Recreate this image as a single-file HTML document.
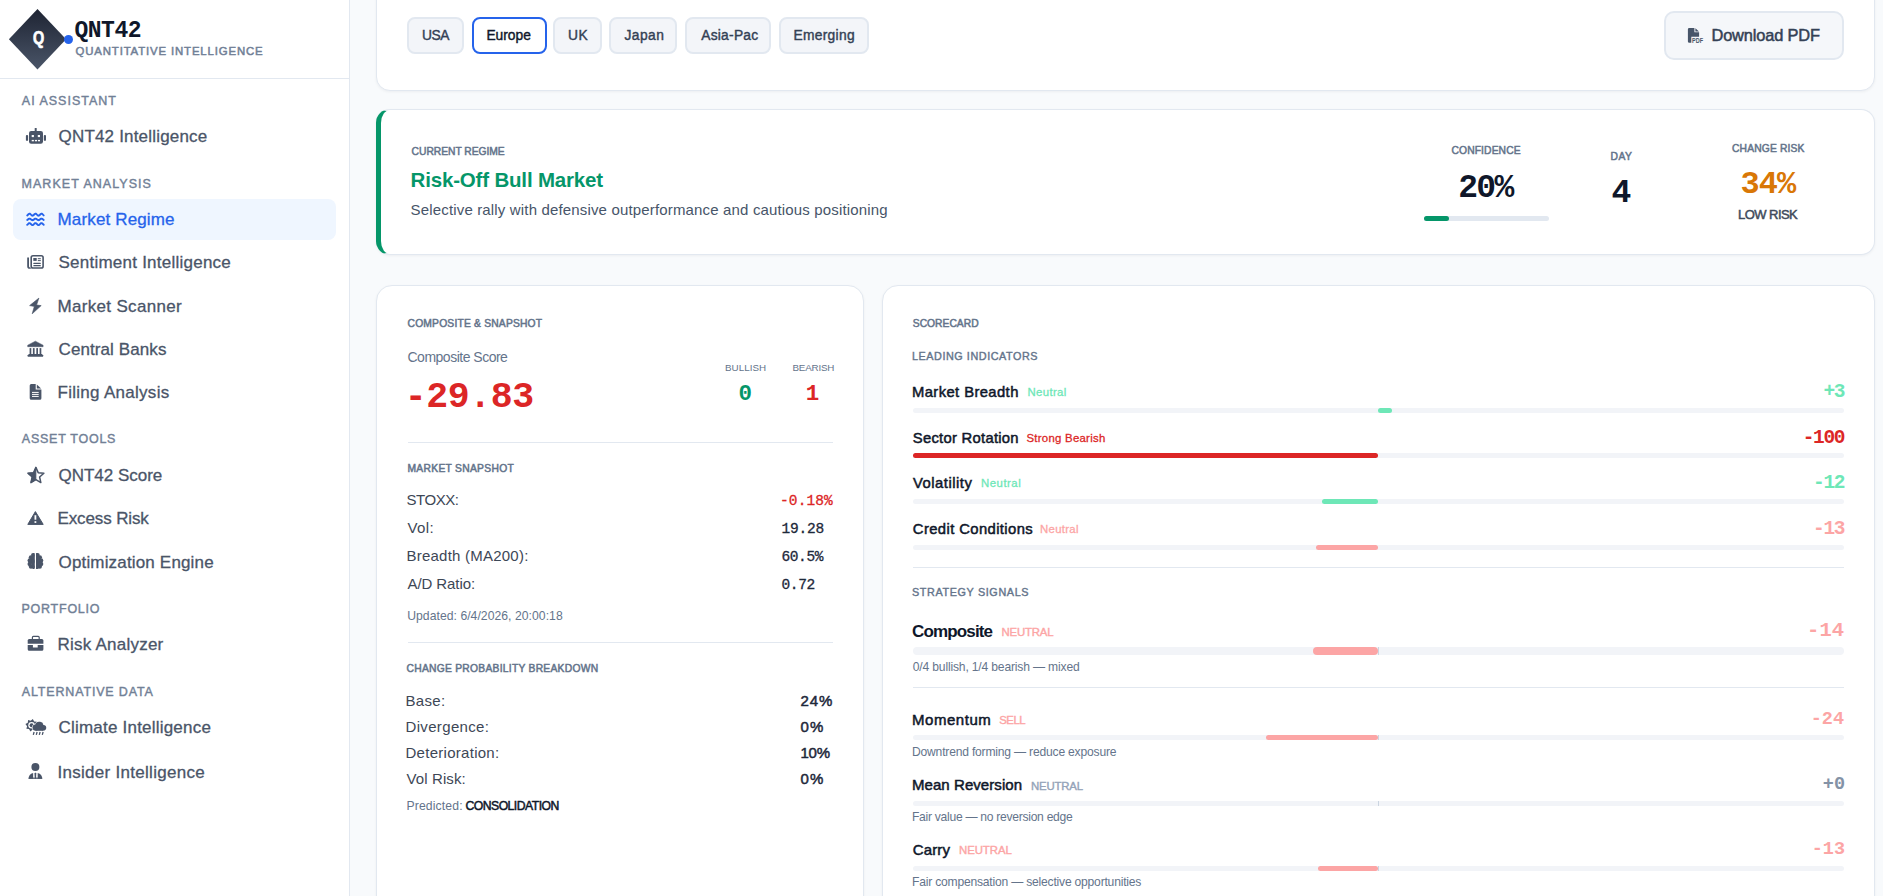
<!DOCTYPE html>
<html><head><meta charset="utf-8"><title>QNT42 Market Regime</title>
<style>
html,body{margin:0;padding:0;}
body{width:1883px;height:896px;overflow:hidden;background:#f8fafc;position:relative;font-family:"Liberation Sans",sans-serif;}
.b{position:absolute;}
.t{position:absolute;line-height:0;white-space:nowrap;}
svg{position:absolute;}
</style></head><body>
<div class="b" style="left:0.00px;top:0.00px;width:349.00px;height:896.00px;background:#fff;"></div>
<div class="b" style="left:349.00px;top:0.00px;width:1.00px;height:896.00px;background:#e2e8f0;"></div>
<div class="b" style="left:0.00px;top:78.00px;width:349.00px;height:1.00px;background:#e2e8f0;"></div>
<div class="b" style="left:8.9px;top:8.9px;width:57.2px;height:60.7px;clip-path:polygon(50% 0,100% 50%,50% 100%,0 50%);background:linear-gradient(180deg,#1e2433,#4a5568);"></div>
<div class="t" style="left:33.2px;top:38.16px;font-family:'Liberation Sans', sans-serif;font-size:18px;font-weight:700;color:#fff;-webkit-text-stroke:0.7px #fff;transform:scaleX(0.8);transform-origin:0 0;">Q</div>
<div class="b" style="left:63.9px;top:34.5px;width:9px;height:9px;border-radius:50%;background:#2563eb;"></div>
<div class="b" style="left:13.00px;top:199.00px;width:323.00px;height:41.00px;background:#eff6ff;border-radius:8px;"></div>
<div class="b" style="left:376.00px;top:-20.00px;width:1499.00px;height:110.50px;background:#fff;border:1px solid #e2e8f0;border-radius:14px;box-sizing:border-box;box-shadow:0 1px 3px rgba(15,23,42,0.05);"></div>
<div class="b" style="left:407.20px;top:17.00px;width:57.30px;height:37.00px;background:#f3f5f9;border:2px solid #e2e8f0;border-radius:8px;box-sizing:border-box;"></div>
<div class="b" style="left:472.20px;top:17.00px;width:74.40px;height:37.00px;background:#fff;border:2px solid #2563eb;border-radius:8px;box-sizing:border-box;"></div>
<div class="b" style="left:553.00px;top:17.00px;width:48.50px;height:37.00px;background:#f3f5f9;border:2px solid #e2e8f0;border-radius:8px;box-sizing:border-box;"></div>
<div class="b" style="left:609.20px;top:17.00px;width:68.10px;height:37.00px;background:#f3f5f9;border:2px solid #e2e8f0;border-radius:8px;box-sizing:border-box;"></div>
<div class="b" style="left:685.20px;top:17.00px;width:86.20px;height:37.00px;background:#f3f5f9;border:2px solid #e2e8f0;border-radius:8px;box-sizing:border-box;"></div>
<div class="b" style="left:779.20px;top:17.00px;width:90.20px;height:37.00px;background:#f3f5f9;border:2px solid #e2e8f0;border-radius:8px;box-sizing:border-box;"></div>
<div class="b" style="left:1664.00px;top:11.00px;width:180.00px;height:48.50px;background:#f5f7fa;border:2px solid #e2e8f0;border-radius:10px;box-sizing:border-box;"></div>
<div class="b" style="left:376.00px;top:109.00px;width:1499.00px;height:145.50px;background:#fff;border:1px solid #e2e8f0;border-left:5px solid #059669;border-radius:14px;box-sizing:border-box;box-shadow:0 1px 3px rgba(15,23,42,0.05);"></div>
<div class="b" style="left:1424.00px;top:216.00px;width:125.00px;height:5.00px;background:#e2e8f0;border-radius:3px;"></div>
<div class="b" style="left:1424.00px;top:216.00px;width:25.00px;height:5.00px;background:#059669;border-radius:3px;"></div>
<div class="b" style="left:376.00px;top:285.00px;width:488.00px;height:700.00px;background:#fff;border:1px solid #e2e8f0;border-radius:16px;box-sizing:border-box;box-shadow:0 1px 3px rgba(15,23,42,0.05);"></div>
<div class="b" style="left:407.50px;top:442.00px;width:425.50px;height:1.00px;background:#e2e8f0;"></div>
<div class="b" style="left:407.50px;top:642.00px;width:425.50px;height:1.00px;background:#e2e8f0;"></div>
<div class="b" style="left:882.00px;top:285.00px;width:993.00px;height:700.00px;background:#fff;border:1px solid #e2e8f0;border-radius:16px;box-sizing:border-box;box-shadow:0 1px 3px rgba(15,23,42,0.05);"></div>
<div class="b" style="left:913.00px;top:408.00px;width:931.00px;height:5.00px;background:#f2f4f8;border-radius:5px;"></div><div class="b" style="left:1378.00px;top:408.00px;width:14.00px;height:5.00px;background:#6ee7b7;border-radius:5px;"></div>
<div class="b" style="left:913.00px;top:453.00px;width:931.00px;height:5.00px;background:#f2f4f8;border-radius:5px;"></div><div class="b" style="left:913.00px;top:453.00px;width:465.00px;height:5.00px;background:#dc2626;border-radius:5px;"></div>
<div class="b" style="left:913.00px;top:499.00px;width:931.00px;height:5.00px;background:#f2f4f8;border-radius:5px;"></div><div class="b" style="left:1322.00px;top:499.00px;width:56.00px;height:5.00px;background:#6ee7b7;border-radius:5px;"></div>
<div class="b" style="left:913.00px;top:544.50px;width:931.00px;height:5.00px;background:#f2f4f8;border-radius:5px;"></div><div class="b" style="left:1316.00px;top:544.50px;width:62.00px;height:5.00px;background:#fca5a5;border-radius:5px;"></div>
<div class="b" style="left:913.00px;top:567.00px;width:931.00px;height:1.00px;background:#e2e8f0;"></div>
<div class="b" style="left:913.00px;top:647.00px;width:931.00px;height:8.00px;background:#f2f4f8;border-radius:8px;"></div><div class="b" style="left:1313.00px;top:647.00px;width:65.00px;height:8.00px;background:#fca5a5;border-radius:8px;"></div><div class="b" style="left:1378.00px;top:647.00px;width:1.00px;height:8.00px;background:#cbd5e1;"></div>
<div class="b" style="left:913.00px;top:687.00px;width:931.00px;height:1.00px;background:#e2e8f0;"></div>
<div class="b" style="left:913.00px;top:735.00px;width:931.00px;height:5.00px;background:#f2f4f8;border-radius:5px;"></div><div class="b" style="left:1266.00px;top:735.00px;width:112.00px;height:5.00px;background:#fca5a5;border-radius:5px;"></div><div class="b" style="left:1378.00px;top:735.00px;width:1.00px;height:5.00px;background:#cbd5e1;"></div>
<div class="b" style="left:913.00px;top:801.00px;width:931.00px;height:5.00px;background:#f2f4f8;border-radius:5px;"></div><div class="b" style="left:1378.00px;top:801.00px;width:1.00px;height:5.00px;background:#cbd5e1;"></div>
<div class="b" style="left:913.00px;top:866.00px;width:931.00px;height:5.00px;background:#f2f4f8;border-radius:5px;"></div><div class="b" style="left:1318.00px;top:866.00px;width:60.00px;height:5.00px;background:#fca5a5;border-radius:5px;"></div><div class="b" style="left:1378.00px;top:866.00px;width:1.00px;height:5.00px;background:#cbd5e1;"></div>
<svg style="left:0;top:0" width="349" height="896" viewBox="0 0 349 896">
<g fill="#4a5568">
<!-- robot -->
<rect x="34.7" y="128" width="2" height="4" rx="0.6"/>
<rect x="29" y="131" width="14" height="12.8" rx="2.2"/>
<rect x="25.9" y="135" width="2.2" height="5.8" rx="0.9"/>
<rect x="43.8" y="135" width="2.2" height="5.8" rx="0.9"/>
<g fill="#fff"><rect x="31.7" y="135" width="2.2" height="2.1"/><rect x="37.8" y="135" width="2.2" height="2.1"/>
<rect x="31.7" y="139.9" width="2.2" height="1.4"/><rect x="34.9" y="139.9" width="2.1" height="1.4"/><rect x="37.9" y="139.9" width="2.1" height="1.4"/></g>
<!-- newspaper -->
<rect x="31.2" y="255.7" width="11.9" height="12.3" rx="1.8" fill="none" stroke="#4a5568" stroke-width="1.6"/>
<path d="M27.2,257.5 H29 V266.6 Q29,267.5 30.4,267.5 L31,268.8 H29.8 Q27.2,268.8 27.2,266.2 Z"/>
<rect x="33.3" y="258" width="3.4" height="2.9"/>
<rect x="37.8" y="258.2" width="3" height="1"/><rect x="37.8" y="260.1" width="3" height="1"/>
<rect x="33.3" y="262.8" width="7.5" height="1.2" rx="0.5"/><rect x="33.3" y="265" width="7.5" height="1.2" rx="0.5"/>
<!-- bolt -->
<polygon points="38.9,298.1 29.6,305.6 34.3,306.4 32.2,313.8 41.2,305.6 36.6,305.0" stroke="#4a5568" stroke-width="0.6" stroke-linejoin="round"/>
<!-- bank -->
<polygon points="35.4,341.2 43.1,345.2 43.1,346.7 27.7,346.7 27.7,345.2" stroke="#4a5568" stroke-width="0.5" stroke-linejoin="round"/>
<rect x="29.6" y="348.1" width="1.7" height="6.4"/><rect x="32.9" y="348.1" width="1.7" height="6.4"/>
<rect x="36.3" y="348.1" width="1.7" height="6.4"/><rect x="39.6" y="348.1" width="1.7" height="6.4"/>
<rect x="28.6" y="354" width="13.6" height="1"/>
<rect x="27.7" y="354.8" width="15.4" height="2" rx="0.4"/>
<!-- file -->
<path d="M29.7,385.5 Q29.7,384 31.2,384 H35.7 V389.6 H41.4 V398.3 Q41.4,399.8 39.9,399.8 H31.2 Q29.7,399.8 29.7,398.3 Z"/>
<polygon points="36.8,384.4 41.1,388.6 36.8,388.6"/>
<g fill="#fff"><rect x="32" y="391.9" width="6.7" height="1"/><rect x="32" y="393.9" width="6.7" height="1"/><rect x="32" y="395.9" width="6.7" height="1"/></g>
<!-- star half -->
<polygon points="35.90,467.40 38.19,472.64 43.89,473.20 39.61,477.01 40.84,482.60 35.90,479.70 30.96,482.60 32.19,477.01 27.91,473.20 33.61,472.64" fill="none" stroke="#4a5568" stroke-width="1.5" stroke-linejoin="round"/>
<polygon points="35.90,467.40 33.61,472.64 27.91,473.20 32.19,477.01 30.96,482.60 35.90,479.70" stroke="#4a5568" stroke-width="0.8" stroke-linejoin="round"/>
<!-- triangle -->
<polygon points="35.4,511.6 43.2,524.4 27.8,524.4" stroke="#4a5568" stroke-width="1" stroke-linejoin="round"/>
<g fill="#fff"><rect x="34.5" y="515.2" width="1.8" height="4.5"/><rect x="34.5" y="521.2" width="1.8" height="1.7"/></g>
<!-- brain -->
<defs><clipPath id="bl"><rect x="20" y="550" width="14.7" height="22"/></clipPath><clipPath id="br"><rect x="36.1" y="550" width="14" height="22"/></clipPath></defs>
<g clip-path="url(#bl)"><circle cx="32.3" cy="561.3" r="2.6"/><circle cx="33.00" cy="554.90" r="1.90"/><circle cx="30.90" cy="557.30" r="2.10"/><circle cx="29.80" cy="560.50" r="2.30"/><circle cx="29.70" cy="563.90" r="2.20"/><circle cx="31.00" cy="566.50" r="2.20"/><circle cx="33.20" cy="567.10" r="1.80"/><rect x="31.6" y="554.6" width="3.2" height="13.2"/><rect x="33" y="553" width="1.8" height="15.9" rx="0.5"/></g>
<g clip-path="url(#br)"><circle cx="38.5" cy="561.3" r="2.6"/><circle cx="37.80" cy="554.90" r="1.90"/><circle cx="39.90" cy="557.30" r="2.10"/><circle cx="41.00" cy="560.50" r="2.30"/><circle cx="41.10" cy="563.90" r="2.20"/><circle cx="39.80" cy="566.50" r="2.20"/><circle cx="37.60" cy="567.10" r="1.80"/><rect x="36.0" y="554.6" width="3.2" height="13.2"/><rect x="36.0" y="553" width="1.8" height="15.9" rx="0.5"/></g>
<!-- briefcase -->
<rect x="32.4" y="636.4" width="6.8" height="3.6" rx="1" fill="none" stroke="#4a5568" stroke-width="1.2"/>
<path d="M27.7,640.5 Q27.7,639 29.2,639 H41.9 Q43.4,639 43.4,640.5 V643.7 H27.7 Z"/>
<path d="M27.7,645.1 H32.9 V647.4 H37.7 V645.1 H43.4 V649.3 Q43.4,650.8 41.9,650.8 H29.2 Q27.7,650.8 27.7,649.3 Z"/>
<!-- cloud sun rain -->
<polygon points="32.83,719.12 34.16,721.48 36.84,721.80 36.11,724.40 37.78,726.53 35.42,727.86 35.10,730.54 32.50,729.81 30.37,731.48 29.04,729.12 26.36,728.80 27.09,726.20 25.42,724.07 27.78,722.74 28.10,720.06 30.70,720.79"/>
<circle cx="31.6" cy="725.3" r="3.3" fill="#fff"/>
<circle cx="31.6" cy="725.3" r="2.0"/>
<g stroke="#fff" stroke-width="1.2">
<circle cx="39.3" cy="725.9" r="4.1"/><circle cx="35.6" cy="727.6" r="3.1"/><circle cx="43.4" cy="727.7" r="2.8"/>
</g>
<circle cx="39.3" cy="725.9" r="4.1"/><circle cx="35.6" cy="727.6" r="3.1"/><circle cx="43.4" cy="727.7" r="2.8"/>
<rect x="35.6" y="726.5" width="7.8" height="4.3"/>
<g stroke="#4a5568" stroke-width="1.3" stroke-linecap="butt">
<line x1="34.1" y1="732" x2="33.3" y2="734.9"/><line x1="37.1" y1="732" x2="36.3" y2="734.9"/><line x1="40.1" y1="732" x2="39.3" y2="734.9"/><line x1="43.1" y1="732" x2="42.3" y2="734.9"/>
</g>
<!-- user tie -->
<circle cx="35.4" cy="766.9" r="4"/>
<path d="M28.6,778.8 Q28.6,774.0 33.1,772.9 V778.8 Z"/>
<path d="M42.2,778.8 Q42.2,774.0 37.7,772.9 V778.8 Z"/>
<polygon points="35.4,772.6 36.3,773.5 36.0,778.8 34.8,778.8 34.5,773.5"/>
<rect x="28.6" y="777.6" width="13.6" height="1.2"/>
</g>
<g fill="none"><rect x="12.5" y="198.5" width="0" height="0"/></g>
<g><polyline points="27.20,215.44 27.70,215.01 28.20,214.49 28.70,214.03 29.20,213.75 29.70,213.72 30.20,213.96 30.70,214.39 31.20,214.91 31.70,215.37 32.20,215.65 32.70,215.68 33.20,215.44 33.70,215.01 34.20,214.49 34.70,214.03 35.20,213.75 35.70,213.72 36.20,213.96 36.70,214.39 37.20,214.91 37.70,215.37 38.20,215.65 38.70,215.68 39.20,215.44 39.70,215.01 40.20,214.49 40.70,214.03 41.20,213.75 41.70,213.72 42.20,213.96 42.70,214.39 43.20,214.91 43.70,215.37" fill="none" stroke="#2563eb" stroke-width="1.9" stroke-linecap="round" stroke-linejoin="round"/><polyline points="27.20,219.99 27.70,219.65 28.20,219.23 28.70,218.86 29.20,218.64 29.70,218.62 30.20,218.81 30.70,219.15 31.20,219.57 31.70,219.94 32.20,220.16 32.70,220.18 33.20,219.99 33.70,219.65 34.20,219.23 34.70,218.86 35.20,218.64 35.70,218.62 36.20,218.81 36.70,219.15 37.20,219.57 37.70,219.94 38.20,220.16 38.70,220.18 39.20,219.99 39.70,219.65 40.20,219.23 40.70,218.86 41.20,218.64 41.70,218.62 42.20,218.81 42.70,219.15 43.20,219.57 43.70,219.94" fill="none" stroke="#2563eb" stroke-width="1.9" stroke-linecap="round" stroke-linejoin="round"/><polyline points="27.20,224.84 27.70,224.41 28.20,223.89 28.70,223.43 29.20,223.15 29.70,223.12 30.20,223.36 30.70,223.79 31.20,224.31 31.70,224.77 32.20,225.05 32.70,225.08 33.20,224.84 33.70,224.41 34.20,223.89 34.70,223.43 35.20,223.15 35.70,223.12 36.20,223.36 36.70,223.79 37.20,224.31 37.70,224.77 38.20,225.05 38.70,225.08 39.20,224.84 39.70,224.41 40.20,223.89 40.70,223.43 41.20,223.15 41.70,223.12 42.20,223.36 42.70,223.79 43.20,224.31 43.70,224.77" fill="none" stroke="#2563eb" stroke-width="1.9" stroke-linecap="round" stroke-linejoin="round"/></g>
</svg>
<svg style="left:1680px;top:20px" width="30" height="30" viewBox="1680 20 30 30">
<path d="M1687.9,29.3 Q1687.9,27.9 1689.3,27.9 H1694.4 V32.3 H1699.1 V36.7 H1691.3 V42.8 H1689.3 Q1687.9,42.8 1687.9,41.4 Z" fill="#475569"/>
<polygon points="1695.4,28.2 1699,31.6 1695.4,31.6" fill="#475569"/>
<text x="1692" y="42.8" font-family="'Liberation Sans', sans-serif" font-size="6.5" font-weight="700" fill="#475569" textLength="11" lengthAdjust="spacingAndGlyphs">PDF</text>
</svg>

<div class="t" id="logo" style="top:30.77px;font-family:'Liberation Mono', monospace;font-size:23.00px;font-weight:700;color:#0f172a;letter-spacing:-0.500px;left:74.50px;">QNT42</div>
<div class="t" id="logosub" style="top:51.15px;font-family:'Liberation Sans', sans-serif;font-size:11.40px;font-weight:400;color:#718096;-webkit-text-stroke:0.5px #718096;letter-spacing:0.854px;left:75.50px;">QUANTITATIVE INTELLIGENCE</div>
<div class="t" id="lbl0" style="top:100.67px;font-family:'Liberation Sans', sans-serif;font-size:12.50px;font-weight:400;color:#718096;-webkit-text-stroke:0.4px #718096;letter-spacing:1.000px;left:21.80px;">AI ASSISTANT</div>
<div class="t" id="lbl1" style="top:183.67px;font-family:'Liberation Sans', sans-serif;font-size:12.50px;font-weight:400;color:#718096;-webkit-text-stroke:0.4px #718096;letter-spacing:1.036px;left:21.50px;">MARKET ANALYSIS</div>
<div class="t" id="lbl2" style="top:438.87px;font-family:'Liberation Sans', sans-serif;font-size:12.50px;font-weight:400;color:#718096;-webkit-text-stroke:0.4px #718096;letter-spacing:0.750px;left:21.80px;">ASSET TOOLS</div>
<div class="t" id="lbl3" style="top:608.67px;font-family:'Liberation Sans', sans-serif;font-size:12.50px;font-weight:400;color:#718096;-webkit-text-stroke:0.4px #718096;letter-spacing:0.750px;left:21.50px;">PORTFOLIO</div>
<div class="t" id="lbl4" style="top:691.92px;font-family:'Liberation Sans', sans-serif;font-size:12.50px;font-weight:400;color:#718096;-webkit-text-stroke:0.4px #718096;letter-spacing:0.833px;left:21.80px;">ALTERNATIVE DATA</div>
<div class="t" id="nav0" style="top:137.11px;font-family:'Liberation Sans', sans-serif;font-size:17.00px;font-weight:400;color:#4a5568;-webkit-text-stroke:0.3px #4a5568;letter-spacing:0.188px;left:58.50px;">QNT42 Intelligence</div>
<div class="t" id="nav1" style="top:220.31px;font-family:'Liberation Sans', sans-serif;font-size:17.00px;font-weight:400;color:#2563eb;-webkit-text-stroke:0.3px #2563eb;letter-spacing:0.150px;left:57.50px;">Market Regime</div>
<div class="t" id="nav2" style="top:263.11px;font-family:'Liberation Sans', sans-serif;font-size:17.00px;font-weight:400;color:#4a5568;-webkit-text-stroke:0.3px #4a5568;letter-spacing:0.238px;left:58.50px;">Sentiment Intelligence</div>
<div class="t" id="nav3" style="top:306.91px;font-family:'Liberation Sans', sans-serif;font-size:17.00px;font-weight:400;color:#4a5568;-webkit-text-stroke:0.3px #4a5568;letter-spacing:0.323px;left:57.50px;">Market Scanner</div>
<div class="t" id="nav4" style="top:350.31px;font-family:'Liberation Sans', sans-serif;font-size:17.00px;font-weight:400;color:#4a5568;-webkit-text-stroke:0.3px #4a5568;letter-spacing:0.100px;left:58.50px;">Central Banks</div>
<div class="t" id="nav5" style="top:393.11px;font-family:'Liberation Sans', sans-serif;font-size:17.00px;font-weight:400;color:#4a5568;-webkit-text-stroke:0.3px #4a5568;letter-spacing:0.286px;left:57.50px;">Filing Analysis</div>
<div class="t" id="nav6" style="top:475.51px;font-family:'Liberation Sans', sans-serif;font-size:17.00px;font-weight:400;color:#4a5568;-webkit-text-stroke:0.3px #4a5568;letter-spacing:-0.020px;left:58.50px;">QNT42 Score</div>
<div class="t" id="nav7" style="top:519.21px;font-family:'Liberation Sans', sans-serif;font-size:17.00px;font-weight:400;color:#4a5568;-webkit-text-stroke:0.3px #4a5568;letter-spacing:-0.120px;left:57.50px;">Excess Risk</div>
<div class="t" id="nav8" style="top:562.61px;font-family:'Liberation Sans', sans-serif;font-size:17.00px;font-weight:400;color:#4a5568;-webkit-text-stroke:0.3px #4a5568;letter-spacing:0.167px;left:58.50px;">Optimization Engine</div>
<div class="t" id="nav9" style="top:645.31px;font-family:'Liberation Sans', sans-serif;font-size:17.00px;font-weight:400;color:#4a5568;-webkit-text-stroke:0.3px #4a5568;letter-spacing:0.233px;left:57.50px;">Risk Analyzer</div>
<div class="t" id="nav10" style="top:728.01px;font-family:'Liberation Sans', sans-serif;font-size:17.00px;font-weight:400;color:#4a5568;-webkit-text-stroke:0.3px #4a5568;letter-spacing:0.211px;left:58.50px;">Climate Intelligence</div>
<div class="t" id="nav11" style="top:772.61px;font-family:'Liberation Sans', sans-serif;font-size:17.00px;font-weight:400;color:#4a5568;-webkit-text-stroke:0.3px #4a5568;letter-spacing:0.284px;left:57.50px;">Insider Intelligence</div>
<div class="t" id="pill0" style="top:36.32px;font-family:'Liberation Sans', sans-serif;font-size:13.80px;font-weight:400;color:#334155;-webkit-text-stroke:0.4px #334155;letter-spacing:-0.500px;left:422.00px;">USA</div>
<div class="t" id="pill1" style="top:36.32px;font-family:'Liberation Sans', sans-serif;font-size:13.80px;font-weight:400;color:#0f172a;-webkit-text-stroke:0.4px #0f172a;letter-spacing:-0.000px;left:486.40px;">Europe</div>
<div class="t" id="pill2" style="top:36.32px;font-family:'Liberation Sans', sans-serif;font-size:13.80px;font-weight:400;color:#334155;-webkit-text-stroke:0.4px #334155;letter-spacing:0.500px;left:568.00px;">UK</div>
<div class="t" id="pill3" style="top:36.32px;font-family:'Liberation Sans', sans-serif;font-size:13.80px;font-weight:400;color:#334155;-webkit-text-stroke:0.4px #334155;letter-spacing:0.450px;left:624.50px;">Japan</div>
<div class="t" id="pill4" style="top:36.32px;font-family:'Liberation Sans', sans-serif;font-size:13.80px;font-weight:400;color:#334155;-webkit-text-stroke:0.4px #334155;letter-spacing:0.257px;left:701.20px;">Asia-Pac</div>
<div class="t" id="pill5" style="top:36.32px;font-family:'Liberation Sans', sans-serif;font-size:13.80px;font-weight:400;color:#334155;-webkit-text-stroke:0.4px #334155;letter-spacing:0.286px;left:793.50px;">Emerging</div>
<div class="t" id="dl" style="top:35.02px;font-family:'Liberation Sans', sans-serif;font-size:16.40px;font-weight:400;color:#334155;-webkit-text-stroke:0.5px #334155;letter-spacing:-0.164px;left:1711.50px;">Download PDF</div>
<div class="t" id="cr" style="top:152.43px;font-family:'Liberation Sans', sans-serif;font-size:10.30px;font-weight:400;color:#64748b;-webkit-text-stroke:0.5px #64748b;letter-spacing:-0.038px;left:411.60px;">CURRENT REGIME</div>
<div class="t" id="rname" style="top:179.90px;font-family:'Liberation Sans', sans-serif;font-size:20.50px;font-weight:700;color:#059669;letter-spacing:-0.179px;left:410.60px;">Risk-Off Bull Market</div>
<div class="t" id="rdesc" style="top:209.60px;font-family:'Liberation Sans', sans-serif;font-size:15.00px;font-weight:400;color:#475569;letter-spacing:0.159px;left:410.60px;">Selective rally with defensive outperformance and cautious positioning</div>
<div class="t" id="conf" style="top:151.33px;font-family:'Liberation Sans', sans-serif;font-size:10.30px;font-weight:400;color:#64748b;-webkit-text-stroke:0.5px #64748b;letter-spacing:0.111px;left:1451.50px;">CONFIDENCE</div>
<div class="t" id="confv" style="top:188.51px;font-family:'Liberation Mono', monospace;font-size:33.00px;font-weight:700;color:#0f172a;letter-spacing:-1.700px;left:1458.20px;">20%</div>
<div class="t" id="day" style="top:157.33px;font-family:'Liberation Sans', sans-serif;font-size:10.30px;font-weight:400;color:#64748b;-webkit-text-stroke:0.5px #64748b;letter-spacing:0.500px;left:1610.50px;">DAY</div>
<div class="t" id="dayv" style="top:194.31px;font-family:'Liberation Mono', monospace;font-size:33.00px;font-weight:700;color:#0f172a;left:1611.50px;">4</div>
<div class="t" id="chr" style="top:148.93px;font-family:'Liberation Sans', sans-serif;font-size:10.30px;font-weight:400;color:#64748b;-webkit-text-stroke:0.5px #64748b;letter-spacing:0.150px;left:1732.00px;">CHANGE RISK</div>
<div class="t" id="chrv" style="top:185.47px;font-family:'Liberation Mono', monospace;font-size:32.00px;font-weight:700;color:#d97706;letter-spacing:-0.900px;left:1740.50px;">34%</div>
<div class="t" id="lowr" style="top:214.90px;font-family:'Liberation Sans', sans-serif;font-size:13.00px;font-weight:400;color:#414b5c;-webkit-text-stroke:0.5px #414b5c;letter-spacing:-0.543px;left:1738.00px;">LOW RISK</div>
<div class="t" id="cs" style="top:323.73px;font-family:'Liberation Sans', sans-serif;font-size:10.30px;font-weight:400;color:#64748b;-webkit-text-stroke:0.5px #64748b;letter-spacing:0.189px;left:407.50px;">COMPOSITE &amp; SNAPSHOT</div>
<div class="t" id="csl" style="top:357.45px;font-family:'Liberation Sans', sans-serif;font-size:14.00px;font-weight:400;color:#64748b;letter-spacing:-0.500px;left:407.50px;">Composite Score</div>
<div class="t" id="csv" style="top:398.27px;font-family:'Liberation Mono', monospace;font-size:36.50px;font-weight:700;color:#dc2626;letter-spacing:-0.400px;left:404.80px;">-29.83</div>
<div class="t" id="bull" style="top:368.40px;font-family:'Liberation Sans', sans-serif;font-size:9.80px;font-weight:400;color:#64748b;letter-spacing:0.033px;left:725.00px;">BULLISH</div>
<div class="t" id="bear" style="top:368.40px;font-family:'Liberation Sans', sans-serif;font-size:9.80px;font-weight:400;color:#64748b;letter-spacing:-0.200px;left:792.50px;">BEARISH</div>
<div class="t" id="bullv" style="top:394.00px;font-family:'Liberation Mono', monospace;font-size:22.50px;font-weight:700;color:#059669;left:738.60px;">0</div>
<div class="t" id="bearv" style="top:394.00px;font-family:'Liberation Mono', monospace;font-size:22.50px;font-weight:700;color:#dc2626;left:805.80px;">1</div>
<div class="t" id="ms" style="top:469.43px;font-family:'Liberation Sans', sans-serif;font-size:10.30px;font-weight:400;color:#64748b;-webkit-text-stroke:0.5px #64748b;letter-spacing:0.286px;left:407.50px;">MARKET SNAPSHOT</div>
<div class="t" id="snl0" style="top:499.80px;font-family:'Liberation Sans', sans-serif;font-size:15.00px;font-weight:400;color:#3d4756;letter-spacing:-0.440px;left:406.50px;">STOXX:</div>
<div class="t" id="snv0" style="top:501.14px;font-family:'Liberation Mono', monospace;font-size:14.50px;font-weight:400;color:#dc2626;-webkit-text-stroke:0.3px #dc2626;letter-spacing:0.120px;left:780.00px;">-0.18%</div>
<div class="t" id="snl1" style="top:527.80px;font-family:'Liberation Sans', sans-serif;font-size:15.00px;font-weight:400;color:#3d4756;letter-spacing:0.367px;left:407.50px;">Vol:</div>
<div class="t" id="snv1" style="top:529.14px;font-family:'Liberation Mono', monospace;font-size:14.50px;font-weight:400;color:#1e293b;-webkit-text-stroke:0.3px #1e293b;letter-spacing:-0.150px;left:781.40px;">19.28</div>
<div class="t" id="snl2" style="top:555.80px;font-family:'Liberation Sans', sans-serif;font-size:15.00px;font-weight:400;color:#3d4756;letter-spacing:0.227px;left:406.50px;">Breadth (MA200):</div>
<div class="t" id="snv2" style="top:557.14px;font-family:'Liberation Mono', monospace;font-size:14.50px;font-weight:400;color:#1e293b;-webkit-text-stroke:0.3px #1e293b;letter-spacing:-0.350px;left:781.40px;">60.5%</div>
<div class="t" id="snl3" style="top:583.70px;font-family:'Liberation Sans', sans-serif;font-size:15.00px;font-weight:400;color:#3d4756;letter-spacing:-0.089px;left:407.50px;">A/D Ratio:</div>
<div class="t" id="snv3" style="top:585.04px;font-family:'Liberation Mono', monospace;font-size:14.50px;font-weight:400;color:#1e293b;-webkit-text-stroke:0.3px #1e293b;letter-spacing:-0.333px;left:781.40px;">0.72</div>
<div class="t" id="upd" style="top:616.27px;font-family:'Liberation Sans', sans-serif;font-size:12.20px;font-weight:400;color:#64748b;letter-spacing:0.038px;left:407.20px;">Updated: 6/4/2026, 20:00:18</div>
<div class="t" id="cpb" style="top:668.93px;font-family:'Liberation Sans', sans-serif;font-size:10.30px;font-weight:400;color:#64748b;-webkit-text-stroke:0.5px #64748b;letter-spacing:0.259px;left:406.50px;">CHANGE PROBABILITY BREAKDOWN</div>
<div class="t" id="brl0" style="top:700.50px;font-family:'Liberation Sans', sans-serif;font-size:15.00px;font-weight:400;color:#3d4756;letter-spacing:0.325px;left:405.50px;">Base:</div>
<div class="t" id="brv0" style="top:700.50px;font-family:'Liberation Sans', sans-serif;font-size:15.00px;font-weight:400;color:#1e293b;-webkit-text-stroke:0.5px #1e293b;letter-spacing:0.900px;left:800.50px;">24%</div>
<div class="t" id="brl1" style="top:727.30px;font-family:'Liberation Sans', sans-serif;font-size:15.00px;font-weight:400;color:#3d4756;letter-spacing:0.340px;left:405.50px;">Divergence:</div>
<div class="t" id="brv1" style="top:727.30px;font-family:'Liberation Sans', sans-serif;font-size:15.00px;font-weight:400;color:#1e293b;-webkit-text-stroke:0.5px #1e293b;letter-spacing:1.200px;left:800.50px;">0%</div>
<div class="t" id="brl2" style="top:752.50px;font-family:'Liberation Sans', sans-serif;font-size:15.00px;font-weight:400;color:#3d4756;letter-spacing:0.277px;left:405.50px;">Deterioration:</div>
<div class="t" id="brv2" style="top:752.50px;font-family:'Liberation Sans', sans-serif;font-size:15.00px;font-weight:400;color:#1e293b;-webkit-text-stroke:0.5px #1e293b;letter-spacing:-0.250px;left:800.50px;">10%</div>
<div class="t" id="brl3" style="top:779.30px;font-family:'Liberation Sans', sans-serif;font-size:15.00px;font-weight:400;color:#3d4756;letter-spacing:0.112px;left:406.50px;">Vol Risk:</div>
<div class="t" id="brv3" style="top:779.30px;font-family:'Liberation Sans', sans-serif;font-size:15.00px;font-weight:400;color:#1e293b;-webkit-text-stroke:0.5px #1e293b;letter-spacing:1.200px;left:800.50px;">0%</div>
<div class="t" id="pred" style="top:806.37px;font-family:'Liberation Sans', sans-serif;font-size:12.20px;font-weight:400;color:#64748b;letter-spacing:0.133px;left:406.50px;">Predicted:</div>
<div class="t" id="predv" style="top:806.37px;font-family:'Liberation Sans', sans-serif;font-size:12.20px;font-weight:400;color:#0f172a;-webkit-text-stroke:0.5px #0f172a;letter-spacing:-0.517px;left:465.50px;">CONSOLIDATION</div>
<div class="t" id="sc" style="top:324.43px;font-family:'Liberation Sans', sans-serif;font-size:10.30px;font-weight:400;color:#64748b;-webkit-text-stroke:0.5px #64748b;letter-spacing:-0.000px;left:912.80px;">SCORECARD</div>
<div class="t" id="li" style="top:356.26px;font-family:'Liberation Sans', sans-serif;font-size:10.80px;font-weight:400;color:#64748b;-webkit-text-stroke:0.4px #64748b;letter-spacing:0.559px;left:912.00px;">LEADING INDICATORS</div>
<div class="t" id="ldn0" style="top:391.97px;font-family:'Liberation Sans', sans-serif;font-size:14.80px;font-weight:400;color:#0f172a;-webkit-text-stroke:0.5px #0f172a;letter-spacing:0.400px;left:912.00px;">Market Breadth</div>
<div class="t" id="ldt0" style="top:391.95px;font-family:'Liberation Sans', sans-serif;font-size:11.40px;font-weight:400;color:#6ee7b7;-webkit-text-stroke:0.3px #6ee7b7;letter-spacing:0.333px;left:1027.50px;">Neutral</div>
<div class="t" id="ldv0" style="top:391.90px;font-family:'Liberation Mono', monospace;font-size:19.50px;font-weight:700;color:#6ee7b7;letter-spacing:-1.350px;right:38.85px;">+3</div>
<div class="t" id="ldn1" style="top:437.87px;font-family:'Liberation Sans', sans-serif;font-size:14.80px;font-weight:400;color:#0f172a;-webkit-text-stroke:0.5px #0f172a;letter-spacing:0.271px;left:912.80px;">Sector Rotation</div>
<div class="t" id="ldt1" style="top:437.85px;font-family:'Liberation Sans', sans-serif;font-size:11.40px;font-weight:400;color:#dc2626;-webkit-text-stroke:0.3px #dc2626;letter-spacing:0.262px;left:1026.50px;">Strong Bearish</div>
<div class="t" id="ldv1" style="top:437.80px;font-family:'Liberation Mono', monospace;font-size:19.50px;font-weight:700;color:#dc2626;letter-spacing:-1.350px;right:38.85px;">-100</div>
<div class="t" id="ldn2" style="top:483.27px;font-family:'Liberation Sans', sans-serif;font-size:14.80px;font-weight:400;color:#0f172a;-webkit-text-stroke:0.5px #0f172a;letter-spacing:0.511px;left:913.00px;">Volatility</div>
<div class="t" id="ldt2" style="top:483.25px;font-family:'Liberation Sans', sans-serif;font-size:11.40px;font-weight:400;color:#6ee7b7;-webkit-text-stroke:0.3px #6ee7b7;letter-spacing:0.500px;left:981.00px;">Neutral</div>
<div class="t" id="ldv2" style="top:483.20px;font-family:'Liberation Mono', monospace;font-size:19.50px;font-weight:700;color:#6ee7b7;letter-spacing:-1.350px;right:38.85px;">-12</div>
<div class="t" id="ldn3" style="top:528.87px;font-family:'Liberation Sans', sans-serif;font-size:14.80px;font-weight:400;color:#0f172a;-webkit-text-stroke:0.5px #0f172a;letter-spacing:0.400px;left:912.80px;">Credit Conditions</div>
<div class="t" id="ldt3" style="top:528.85px;font-family:'Liberation Sans', sans-serif;font-size:11.40px;font-weight:400;color:#fca5a5;-webkit-text-stroke:0.3px #fca5a5;letter-spacing:0.300px;left:1040.00px;">Neutral</div>
<div class="t" id="ldv3" style="top:528.80px;font-family:'Liberation Mono', monospace;font-size:19.50px;font-weight:700;color:#fca5a5;letter-spacing:-1.350px;right:38.85px;">-13</div>
<div class="t" id="ss" style="top:591.56px;font-family:'Liberation Sans', sans-serif;font-size:10.80px;font-weight:400;color:#64748b;-webkit-text-stroke:0.4px #64748b;letter-spacing:0.633px;left:912.00px;">STRATEGY SIGNALS</div>
<div class="t" id="stn0" style="top:632.01px;font-family:'Liberation Sans', sans-serif;font-size:17.00px;font-weight:700;color:#0f172a;letter-spacing:-0.850px;left:912.00px;">Composite</div>
<div class="t" id="stt0" style="top:632.45px;font-family:'Liberation Sans', sans-serif;font-size:11.40px;font-weight:400;color:#fca5a5;-webkit-text-stroke:0.4px #fca5a5;letter-spacing:-0.167px;left:1001.40px;">NEUTRAL</div>
<div class="t" id="stv0" style="top:631.44px;font-family:'Liberation Mono', monospace;font-size:20.50px;font-weight:700;color:#fca5a5;right:39.00px;">-14</div>
<div class="t" id="std0" style="top:666.81px;font-family:'Liberation Sans', sans-serif;font-size:12.10px;font-weight:400;color:#64748b;letter-spacing:-0.168px;left:912.80px;">0/4 bullish, 1/4 bearish — mixed</div>
<div class="t" id="stn1" style="top:719.70px;font-family:'Liberation Sans', sans-serif;font-size:15.00px;font-weight:400;color:#0f172a;-webkit-text-stroke:0.5px #0f172a;letter-spacing:0.543px;left:912.00px;">Momentum</div>
<div class="t" id="stt1" style="top:720.45px;font-family:'Liberation Sans', sans-serif;font-size:11.40px;font-weight:400;color:#fca5a5;-webkit-text-stroke:0.4px #fca5a5;letter-spacing:-0.500px;left:999.20px;">SELL</div>
<div class="t" id="stv1" style="top:719.97px;font-family:'Liberation Mono', monospace;font-size:18.50px;font-weight:700;color:#fca5a5;right:39.00px;">-24</div>
<div class="t" id="std1" style="top:752.01px;font-family:'Liberation Sans', sans-serif;font-size:12.10px;font-weight:400;color:#64748b;letter-spacing:-0.194px;left:912.00px;">Downtrend forming — reduce exposure</div>
<div class="t" id="stn2" style="top:784.80px;font-family:'Liberation Sans', sans-serif;font-size:15.00px;font-weight:400;color:#0f172a;-webkit-text-stroke:0.5px #0f172a;letter-spacing:0.062px;left:912.00px;">Mean Reversion</div>
<div class="t" id="stt2" style="top:785.55px;font-family:'Liberation Sans', sans-serif;font-size:11.40px;font-weight:400;color:#94a3b8;-webkit-text-stroke:0.4px #94a3b8;letter-spacing:-0.200px;left:1031.00px;">NEUTRAL</div>
<div class="t" id="stv2" style="top:785.07px;font-family:'Liberation Mono', monospace;font-size:18.50px;font-weight:700;color:#8492a6;right:38.00px;">+0</div>
<div class="t" id="std2" style="top:817.01px;font-family:'Liberation Sans', sans-serif;font-size:12.10px;font-weight:400;color:#64748b;letter-spacing:-0.276px;left:912.00px;">Fair value — no reversion edge</div>
<div class="t" id="stn3" style="top:849.80px;font-family:'Liberation Sans', sans-serif;font-size:15.00px;font-weight:400;color:#0f172a;-webkit-text-stroke:0.5px #0f172a;letter-spacing:0.125px;left:912.80px;">Carry</div>
<div class="t" id="stt3" style="top:849.55px;font-family:'Liberation Sans', sans-serif;font-size:11.40px;font-weight:400;color:#fca5a5;-webkit-text-stroke:0.4px #fca5a5;letter-spacing:-0.067px;left:959.00px;">NEUTRAL</div>
<div class="t" id="stv3" style="top:850.07px;font-family:'Liberation Mono', monospace;font-size:18.50px;font-weight:700;color:#fca5a5;right:38.00px;">-13</div>
<div class="t" id="std3" style="top:881.81px;font-family:'Liberation Sans', sans-serif;font-size:12.10px;font-weight:400;color:#64748b;letter-spacing:-0.205px;left:912.00px;">Fair compensation — selective opportunities</div>
</body></html>
